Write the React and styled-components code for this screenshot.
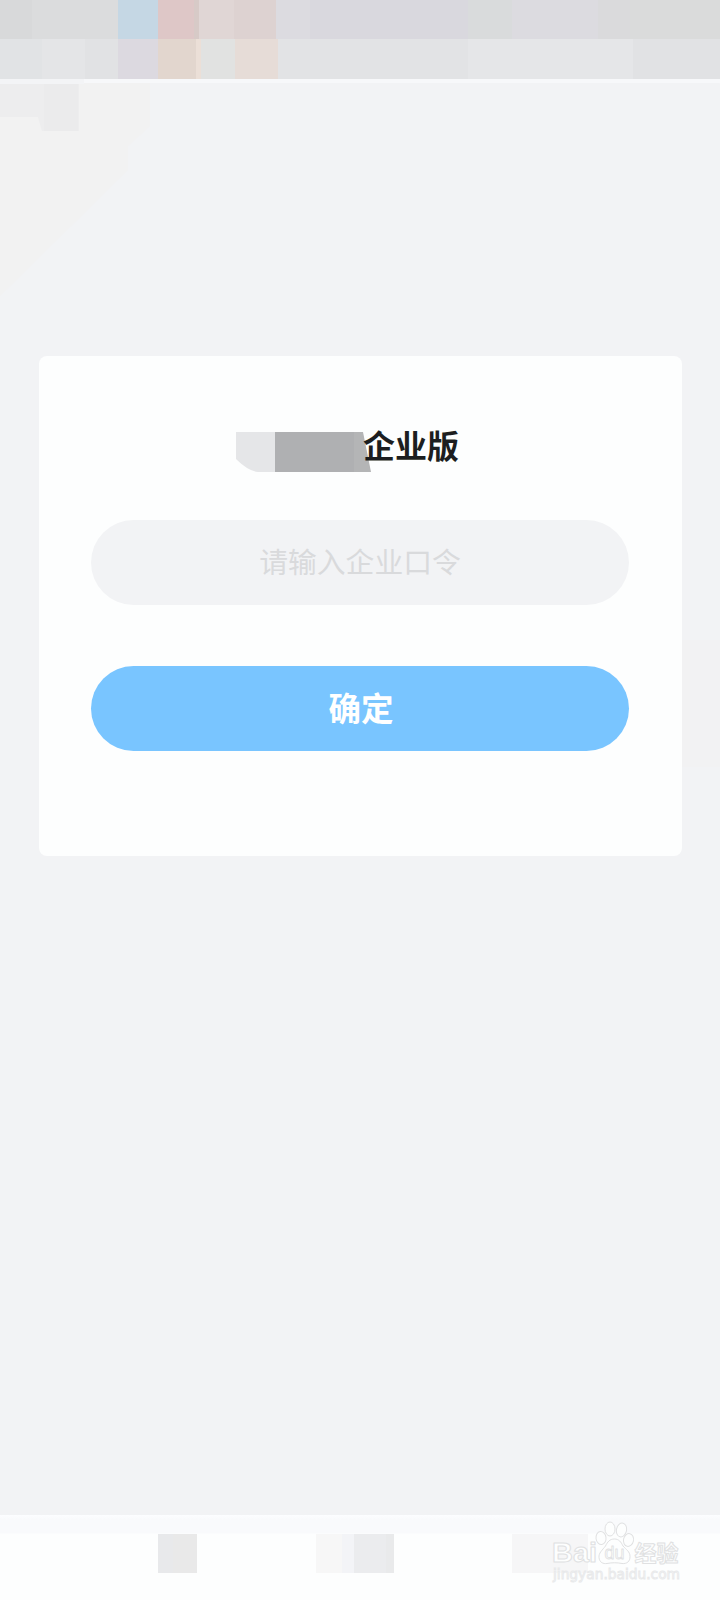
import React, { useState } from 'react';
import styled, { createGlobalStyle } from 'styled-components';

const GlobalStyle = createGlobalStyle`
	* {
		box-sizing: border-box;
	}

	body {
		margin: 0;
		background: #f2f3f5;
		font-family: 'Noto Sans CJK SC', sans-serif;
	}
`;

const Page = styled.div`
	position: relative;
	display: flex;
	flex-direction: column;
	width: 720px;
	height: 1600px;
	overflow: hidden;
	background: #f2f3f5;
`;

const StatusBar = styled.header`
	flex: none;
	height: 79px;
`;

const StatusRow = styled.div`
	display: flex;
	height: ${({ height }) => height}px;
`;

const Tile = styled.span`
	flex: none;
	width: ${({ width }) => width}px;
	background: ${({ color }) => color};
`;

const Content = styled.main`
	position: relative;
	flex: 1;
	padding: 277px 38px 0 39px;
	box-shadow: inset 0 4px 2px -1px #f7f8fa;
`;

const Shade = styled.svg`
	position: absolute;
	top: 0;
	left: 0;
	pointer-events: none;
`;

const Card = styled.form`
	position: relative;
	display: flex;
	flex-direction: column;
	align-items: center;
	height: 500px;
	padding: 72px 53px 0 52px;
	border-radius: 8px;
	background: #fdfefe;
`;

const Title = styled.h1`
	display: flex;
	width: 100%;
	height: 46px;
	margin: 0 0 46px;
	padding-left: 145px;
	color: #1c1e20;
	font-size: 32px;
	font-weight: 700;
	line-height: 32px;
`;

const Mosaic = styled.svg`
	flex: none;
	margin: 4px -8px 0 0;
`;

const TitleText = styled.span`
	position: relative;
	white-space: nowrap;
`;

const CodeInput = styled.input`
	width: 538px;
	height: 85px;
	margin: 0 0 61px;
	padding: 0 0 4px;
	border: 0;
	border-radius: 43px;
	outline: 0;
	background: #f2f3f5;
	color: #1c1e20;
	font-family: inherit;
	font-size: 28.8px;
	text-align: center;

	&::placeholder {
		color: #d9dadc;
		opacity: 1;
	}
`;

const Submit = styled.button`
	width: 538px;
	height: 85px;
	padding: 0 0 4px 2px;
	border: 0;
	border-radius: 43px;
	background: #79c5ff;
	color: #fff;
	font-family: inherit;
	font-size: 32.5px;
	font-weight: 700;
`;

const Footer = styled.footer`
	position: relative;
	flex: none;
	height: 85px;
	padding-top: 19px;
	background: linear-gradient(to bottom, #fcfdff 0, #f9fafc 5px, #f9fafc 18px, #fdfefe 19px);
`;

const NavRow = styled.div`
	display: flex;
	height: 39px;
`;

const Watermark = styled.svg`
	position: absolute;
	right: 30px;
	bottom: 5px;
	overflow: visible;
`;

const topTiles = [
  [32, '#d8d9da'], [86, '#dbdcdd'], [40, '#c5d7e4'], [36, '#dec7c7'], [5, '#d7cac7'],
  [35, '#e0d6d5'], [42, '#ddd2d1'], [34, '#dcdbe0'], [158, '#d9d8de'], [44, '#d9dbdc'],
  [86, '#dcdbe0'], [32, '#dadadc'], [90, '#dadbdb'],
];

const lowerTiles = [
  [42, '#e1e3e5'], [43, '#e4e5e7'], [33, '#e1e2e4'], [40, '#dcd9e0'], [38, '#e2d6ce'],
  [5, '#ebdfd7'], [34, '#e1e2e1'], [43, '#e6dcd7'], [190, '#e2e3e5'], [165, '#e5e6e8'],
  [87, '#e1e2e4'],
];

const navTiles = [
  [158, 'transparent'], [15, '#e8e9eb'], [24, '#e9e9e9'], [119, 'transparent'],
  [26, '#f7f7f7'], [12, '#f3f4f7'], [32, '#ebecee'], [8, '#e9eaeb'],
  [118, 'transparent'], [76, '#f6f6f7'],
];

const Tiles = ({ items }) => items.map(([width, color], index) => (
  <Tile key={index} width={width} color={color} />
));

const PawMark = () => (
  <Watermark width="140" height="76" viewBox="0 0 140 76">
    <g fill="#fdfefe" stroke="#e0e1e2" strokeWidth="1" strokeLinejoin="round">
      <text x="2" y="43" fontFamily="Liberation Sans, sans-serif" fontWeight="700" fontSize="27" textLength="45" lengthAdjust="spacingAndGlyphs">Bai</text>
      <ellipse cx="51" cy="19" rx="5" ry="6.500" transform="rotate(-8 51 19)" />
      <ellipse cx="60" cy="10" rx="5" ry="7" />
      <ellipse cx="71.500" cy="11" rx="5" ry="7" transform="rotate(12 71.500 11)" />
      <ellipse cx="78.500" cy="21" rx="5" ry="6.500" transform="rotate(12 78.500 21)" />
      <path d="M64.500 20c-5 0-7 3-9 7-3 4-7 7-6.500 11.500.5 5 4 6.500 8 6 5-1 10-1 15 0 5 .5 8-2 8-7 0-5-4-7-7-10.500-2-4-4-7-8.500-7z" />
      <text x="54.500" y="40" fontFamily="Liberation Sans, sans-serif" fontSize="18" textLength="20" strokeWidth="0.8">du</text>
      <text x="84.500" y="42" fontFamily="Liberation Sans, Noto Sans CJK SC, sans-serif" fontWeight="700" fontSize="22">经验</text>
    </g>
    <text x="3" y="60" fill="#fdfefe" stroke="#e8e9ea" strokeWidth="0.9" fontFamily="DejaVu Sans, sans-serif" fontSize="13.800" textLength="127" lengthAdjust="spacingAndGlyphs">jingyan.baidu.com</text>
  </Watermark>
);

const App = () => {
  const [code, setCode] = useState('');

  return (
    <Page>
      <GlobalStyle />
      <StatusBar>
        <StatusRow height={39}><Tiles items={topTiles} /></StatusRow>
        <StatusRow height={40}><Tiles items={lowerTiles} /></StatusRow>
      </StatusBar>
      <Content>
        <Shade width="720" height="700">
          <path d="M0 0h150v47l-22 20v24L0 217z" fill="#f2f2f2" />
          <path d="M0 5h79v47H42L38 38H0z" fill="#ededee" />
          <path d="M44 5h34v47H44z" fill="#ebebec" />
          <path d="M0 0h84v5H0z" fill="#f3f4f6" />
          <path d="M84 0h636v4H84z" fill="#f7f8fa" />
          <path d="M682 561h38v127h-38z" fill="#f2f2f3" />
        </Shade>
        <Card onSubmit={(event) => event.preventDefault()}>
          <Title>
            <Mosaic width="135" height="40" viewBox="0 0 135 40">
              <path d="M0 0h39v40H22Q12 39 0 27z" fill="#e5e6e8" />
              <path d="M39 0h79v40H39z" fill="#afb0b2" />
              <path d="M118 0h9l8 40h-17z" fill="#b4b5b6" />
            </Mosaic>
            <TitleText>企业版</TitleText>
          </Title>
          <CodeInput
            placeholder="请输入企业口令"
            value={code}
            onChange={(event) => setCode(event.target.value)}
          />
          <Submit type="submit">确定</Submit>
        </Card>
      </Content>
      <Footer>
        <NavRow><Tiles items={navTiles} /></NavRow>
        <PawMark />
      </Footer>
    </Page>
  );
};

export default App;
